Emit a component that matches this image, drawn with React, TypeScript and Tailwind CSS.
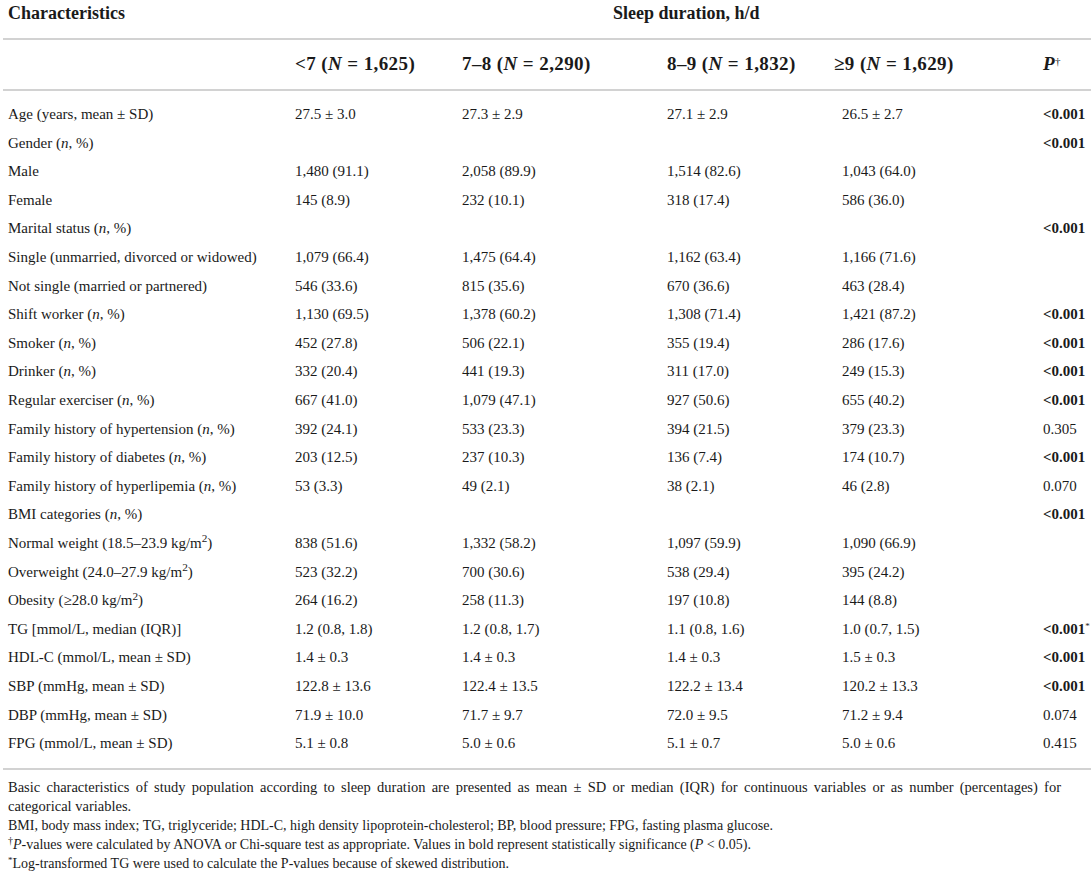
import type { ReactNode } from "react";

type Row = {
	label: ReactNode;
	vals?: string[];
	p?: string;
	bold?: boolean;
	star?: boolean;
};

const N = () => <i>n</i>;

const rows: Row[] = [
	{ label: "Age (years, mean ± SD)", vals: ["27.5 ± 3.0", "27.3 ± 2.9", "27.1 ± 2.9", "26.5 ± 2.7"], p: "<0.001", bold: true },
	{ label: <>Gender (<N />, %)</>, p: "<0.001", bold: true },
	{ label: "Male", vals: ["1,480 (91.1)", "2,058 (89.9)", "1,514 (82.6)", "1,043 (64.0)"] },
	{ label: "Female", vals: ["145 (8.9)", "232 (10.1)", "318 (17.4)", "586 (36.0)"] },
	{ label: <>Marital status (<N />, %)</>, p: "<0.001", bold: true },
	{ label: "Single (unmarried, divorced or widowed)", vals: ["1,079 (66.4)", "1,475 (64.4)", "1,162 (63.4)", "1,166 (71.6)"] },
	{ label: "Not single (married or partnered)", vals: ["546 (33.6)", "815 (35.6)", "670 (36.6)", "463 (28.4)"] },
	{ label: <>Shift worker (<N />, %)</>, vals: ["1,130 (69.5)", "1,378 (60.2)", "1,308 (71.4)", "1,421 (87.2)"], p: "<0.001", bold: true },
	{ label: <>Smoker (<N />, %)</>, vals: ["452 (27.8)", "506 (22.1)", "355 (19.4)", "286 (17.6)"], p: "<0.001", bold: true },
	{ label: <>Drinker (<N />, %)</>, vals: ["332 (20.4)", "441 (19.3)", "311 (17.0)", "249 (15.3)"], p: "<0.001", bold: true },
	{ label: <>Regular exerciser (<N />, %)</>, vals: ["667 (41.0)", "1,079 (47.1)", "927 (50.6)", "655 (40.2)"], p: "<0.001", bold: true },
	{ label: <>Family history of hypertension (<N />, %)</>, vals: ["392 (24.1)", "533 (23.3)", "394 (21.5)", "379 (23.3)"], p: "0.305" },
	{ label: <>Family history of diabetes (<N />, %)</>, vals: ["203 (12.5)", "237 (10.3)", "136 (7.4)", "174 (10.7)"], p: "<0.001", bold: true },
	{ label: <>Family history of hyperlipemia (<N />, %)</>, vals: ["53 (3.3)", "49 (2.1)", "38 (2.1)", "46 (2.8)"], p: "0.070" },
	{ label: <>BMI categories (<N />, %)</>, p: "<0.001", bold: true },
	{ label: <>Normal weight (18.5–23.9 kg/m<sup>2</sup>)</>, vals: ["838 (51.6)", "1,332 (58.2)", "1,097 (59.9)", "1,090 (66.9)"] },
	{ label: <>Overweight (24.0–27.9 kg/m<sup>2</sup>)</>, vals: ["523 (32.2)", "700 (30.6)", "538 (29.4)", "395 (24.2)"] },
	{ label: <>Obesity (≥28.0 kg/m<sup>2</sup>)</>, vals: ["264 (16.2)", "258 (11.3)", "197 (10.8)", "144 (8.8)"] },
	{ label: "TG [mmol/L, median (IQR)]", vals: ["1.2 (0.8, 1.8)", "1.2 (0.8, 1.7)", "1.1 (0.8, 1.6)", "1.0 (0.7, 1.5)"], p: "<0.001", bold: true, star: true },
	{ label: "HDL-C (mmol/L, mean ± SD)", vals: ["1.4 ± 0.3", "1.4 ± 0.3", "1.4 ± 0.3", "1.5 ± 0.3"], p: "<0.001", bold: true },
	{ label: "SBP (mmHg, mean ± SD)", vals: ["122.8 ± 13.6", "122.4 ± 13.5", "122.2 ± 13.4", "120.2 ± 13.3"], p: "<0.001", bold: true },
	{ label: "DBP (mmHg, mean ± SD)", vals: ["71.9 ± 10.0", "71.7 ± 9.7", "72.0 ± 9.5", "71.2 ± 9.4"], p: "0.074" },
	{ label: "FPG (mmol/L, mean ± SD)", vals: ["5.1 ± 0.8", "5.0 ± 0.6", "5.1 ± 0.7", "5.0 ± 0.6"], p: "0.415" },
];

const cols = "grid grid-cols-[287px_167px_205px_175px_201px_1fr] px-[8px]";

export default function App() {
	return (
		<div className="w-[1091px] h-[879px] bg-white text-[#1a1a1a] font-['Liberation_Serif',serif] overflow-hidden">
			{/* HEADER 1 */}
			<div className="flex h-[38px] px-[8px] pt-[1px] text-[18px] font-bold leading-[24px]">
				<div className="w-[605px]">Characteristics</div>
				<div>Sleep duration, h/d</div>
			</div>
			<div className="ml-[3px] h-[2px] bg-[#d2d2d2]" />

			{/* HEADER 2 */}
			<div className={`${cols} h-[49px] items-center text-[19px] tracking-[0.4px] font-bold whitespace-nowrap`}>
				<div />
				<div>&lt;7 (<i>N</i> = 1,625)</div>
				<div>7–8 (<i>N</i> = 2,290)</div>
				<div>8–9 (<i>N</i> = 1,832)</div>
				<div className="-ml-[8px]">≥9 (<i>N</i> = 1,629)</div>
				<div>
					<i>P</i>
					<sup className="text-[11px] font-normal">†</sup>
				</div>
			</div>
			<div className="ml-[3px] h-[2px] bg-[#d2d2d2]" />

			{/* BODY */}
			<div className="pt-[9px] pb-[10px] text-[15px]">
				{rows.map((r, i) => (
					<div key={i} className={`${cols} h-[28.6px] items-center whitespace-nowrap`}>
						<div>{r.label}</div>
						{[0, 1, 2, 3].map((c) => (
							<div key={c}>{r.vals?.[c] ?? ""}</div>
						))}
						<div className={r.bold ? "font-bold" : ""}>
							{r.p}
							{r.star && <sup className="text-[9px] font-normal">*</sup>}
						</div>
					</div>
				))}
			</div>
			<div className="ml-[3px] h-[2px] bg-[#d2d2d2]" />

			{/* FOOTNOTES */}
			<div className="pl-[8px] pr-[30px] pt-[8px] text-[14px] leading-[19px]">
				<p className="text-justify text-[14.5px]">
					Basic characteristics of study population according to sleep duration are presented as mean ± SD or
					median (IQR) for continuous variables or as number (percentages) for categorical variables.
				</p>
				<p>
					BMI, body mass index; TG, triglyceride; HDL-C, high density lipoprotein-cholesterol; BP, blood
					pressure; FPG, fasting plasma glucose.
				</p>
				<p>
					<sup className="text-[10px]">†</sup>
					<i>P</i>-values were calculated by ANOVA or Chi-square test as appropriate. Values in bold represent
					statistically significance (<i>P</i> &lt; 0.05).
				</p>
				<p>
					<sup className="text-[9px]">*</sup>Log-transformed TG were used to calculate the P-values because of
					skewed distribution.
				</p>
			</div>
		</div>
	);
}
